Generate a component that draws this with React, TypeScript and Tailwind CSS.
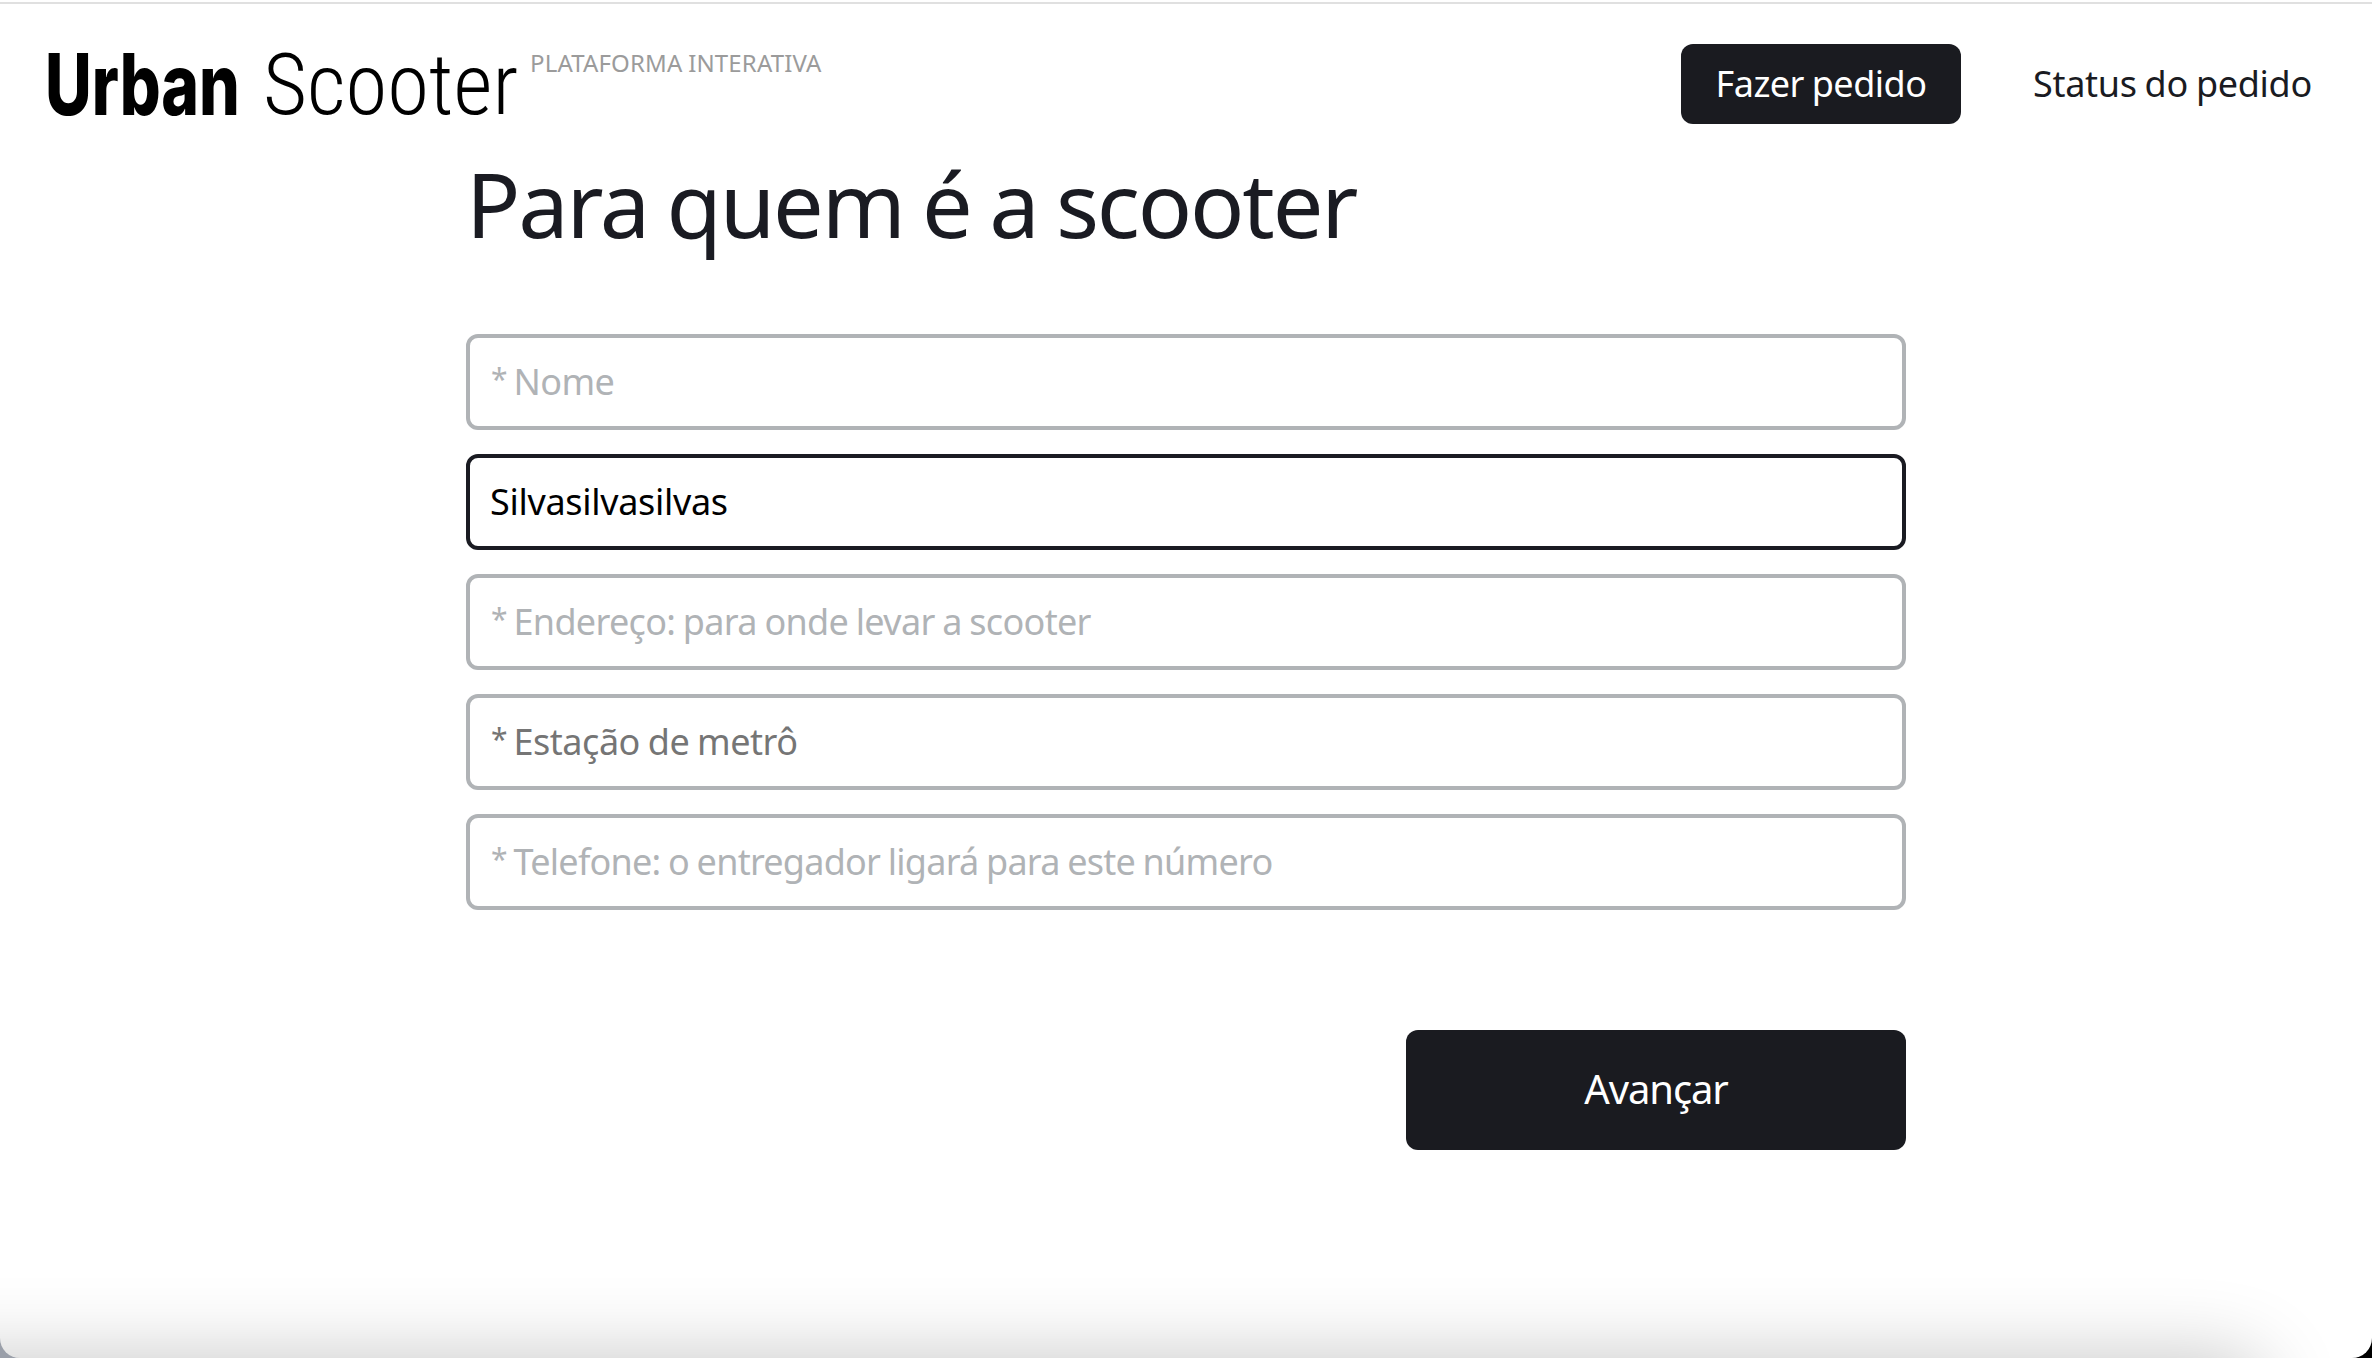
import type { ReactNode } from "react";

type FieldProps = {
  label: string;
  required?: boolean;
  className?: string;
  textClassName?: string;
};

function Field({ label, required = true, className = "border-[#b0b3b6] text-[#b0b3b6]", textClassName = "" }: FieldProps) {
  return (
    <div
      className={`flex h-24 w-full items-center rounded-xl border-4 bg-white pb-px pl-5 text-4xl leading-[48px] whitespace-nowrap ${className}`}
    >
      {required && <span className="relative -top-[3px] w-[23.5px] pl-px text-[30px]">*</span>}
      <span className={`[word-spacing:-0.03em] ${textClassName}`}>{label}</span>
    </div>
  );
}

function NavButton({ children, className }: { children: ReactNode; className: string }) {
  return (
    <button
      type="button"
      className={`flex h-20 items-center rounded-xl pb-px text-4xl whitespace-nowrap [word-spacing:-0.03em] ${className}`}
    >
      {children}
    </button>
  );
}

function Header() {
  return (
    <header className="flex h-[164px] items-start justify-between border-t-2 border-[#e0e0e0] pt-10">
      <a className="flex items-start pl-[45px]">
        <span className="flex h-[82px] items-center leading-none whitespace-nowrap text-black">
          <span className="w-[218px] origin-left scale-x-[0.756] pb-px font-['Inter'] text-[85px] font-extrabold">
            Urban
          </span>
          <span className="w-[267px] origin-left scale-x-[0.988] font-['Roboto_Condensed',Roboto,sans-serif] text-[86px] font-light">
            Scooter
          </span>
        </span>
        <span className="pt-[3px] text-2xl leading-[32px] tracking-[0.15px] whitespace-nowrap text-[#9b9b9b] [word-spacing:-0.03em]">
          PLATAFORMA INTERATIVA
        </span>
      </a>
      <nav className="flex gap-[72px] pr-[59px]">
        <NavButton className="w-[280px] justify-center bg-[#1a1b20] tracking-[-0.52px] text-white">Fazer pedido</NavButton>
        <NavButton className="w-[280px] tracking-[-0.3px] text-[#1a1b22]">Status do pedido</NavButton>
      </nav>
    </header>
  );
}

export default function App() {
  return (
    <div className="flex h-[1358px] w-[2372px] bg-[linear-gradient(90deg,#9a9fa9_50%,#000_50%)] font-['Noto_Sans',sans-serif]">
      <div className="relative w-full overflow-hidden rounded-b-[20px] bg-white pt-[2px]">
        <Header />
        <main className="mx-auto w-[1440px]">
          <h1 className="-mt-[23px] text-[90px] leading-[120px] tracking-[-2.2px] whitespace-nowrap text-[#1a1b22] [word-spacing:-0.03em]">
            Para quem é a scooter
          </h1>
          <form className="mt-[71px] flex flex-col gap-6">
            <Field label="Nome" textClassName="tracking-[-0.6px]" />
            <Field
              label="Silvasilvasilvas"
              required={false}
              className="border-[#1a1b22] text-black"
              textClassName="tracking-[-0.31px]"
            />
            <Field label="Endereço: para onde levar a scooter" textClassName="tracking-[-0.68px]" />
            <Field
              label="Estação de metrô"
              className="border-[#b0b3b6] text-[#757575]"
              textClassName="tracking-[-0.47px]"
            />
            <Field label="Telefone: o entregador ligará para este número" textClassName="tracking-[-0.75px]" />
          </form>
          <div className="mt-[120px] flex justify-end">
            <button
              type="button"
              className="flex h-[120px] w-[500px] items-center justify-center rounded-xl bg-[#1a1b20] pb-[2px] text-[40px] tracking-[-1.1px] text-white"
            >
              Avançar
            </button>
          </div>
        </main>
        <div className="pointer-events-none absolute top-full right-[110px] -left-40 h-40 rounded-[30px] shadow-[0_0_80px_rgba(0,0,0,0.23)]" />
      </div>
    </div>
  );
}
